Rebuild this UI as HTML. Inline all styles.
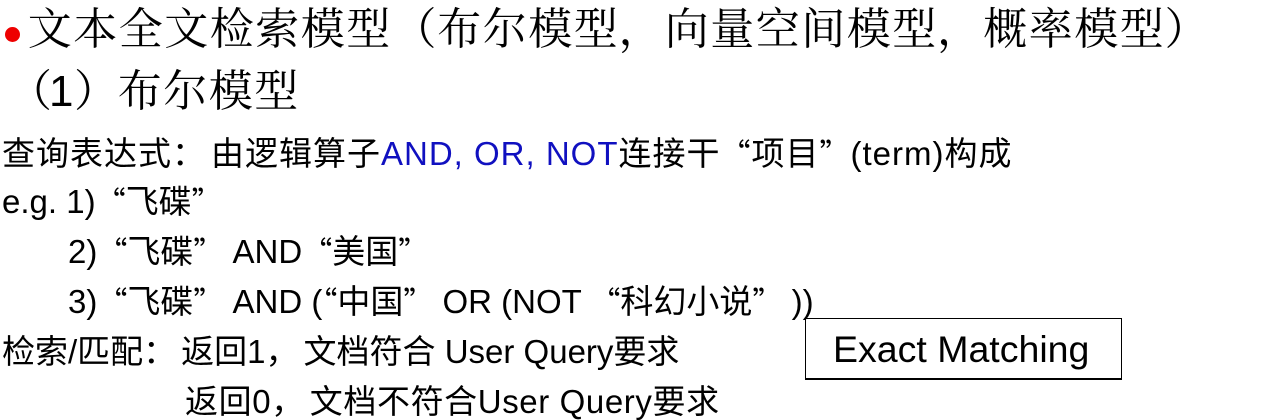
<!DOCTYPE html>
<html><head><meta charset="utf-8"><style>
body{margin:0;width:1268px;height:420px;background:#fff;position:relative;overflow:hidden;color:#000}
.l{position:absolute;white-space:nowrap;line-height:1}
.s{font-family:"Liberation Sans","Noto Sans CJK SC",sans-serif;font-size:33px}
.t{font-family:"Liberation Serif","Noto Serif CJK SC",serif;font-size:44px}
.b{color:#1010c0}
.q{font-family:"Noto Sans CJK SC",sans-serif;font-size:30px}
.c{margin-right:5px}
.g{display:grid;grid-auto-flow:column;grid-auto-columns:45.5px}
.g span{text-align:center}
</style></head><body>
<div style="position:absolute;left:5px;top:27px;width:15px;height:15px;border-radius:50%;background:#e00"></div>
<div class="l t g" style="left:27px;top:8px"><span>文</span><span>本</span><span>全</span><span>文</span><span>检</span><span>索</span><span>模</span><span>型</span><span style="text-align:right">（</span><span>布</span><span>尔</span><span>模</span><span>型</span><span style="text-align:left">，</span><span>向</span><span>量</span><span>空</span><span>间</span><span>模</span><span>型</span><span style="text-align:left">，</span><span>概</span><span>率</span><span>模</span><span>型</span><span style="text-align:left">）</span></div>
<div class="l t" style="left:8px;top:70px">（</div>
<div class="l t" style="left:49px;top:70px;font-family:'Liberation Sans',sans-serif;font-size:44px">1</div>
<div class="l t" style="left:74px;top:70px">）</div>
<div class="l t g" style="left:117px;top:70px"><span>布</span><span>尔</span><span>模</span><span>型</span></div>
<div class="l s" style="left:2px;top:137px;letter-spacing:1px">查询表达式<span class="c">：</span>由逻辑算子<span class="b">AND, OR, NOT</span>连接干<span class="q">“</span>项目<span class="q">”</span>(term)构成</div>
<div class="l s" style="left:2px;top:185px">e.g. 1)<span class="q">“</span>飞碟<span class="q">”</span></div>
<div class="l s" style="left:68px;top:235px">2)<span class="q">“</span>飞碟<span class="q">”</span> AND<span class="q">“</span>美国<span class="q">”</span></div>
<div class="l s" style="left:68px;top:285px">3)<span class="q">“</span>飞碟<span class="q">”</span> AND (<span class="q">“</span>中国<span class="q">”</span> OR (NOT <span class="q">“</span>科幻小说<span class="q">”</span> ))</div>
<div class="l s" style="left:2px;top:335px">检索/匹配<span class="c">：</span>返回1<span class="c">，</span>文档符合 User Query要求</div>
<div class="l s" style="left:185px;top:385px;letter-spacing:0.6px">返回0<span class="c">，</span>文档不符合User Query要求</div>
<div style="position:absolute;left:805px;top:318px;width:315px;height:59px;border:1px solid #000;border-bottom-width:2px"></div>
<div class="l s" style="left:833px;top:331px;font-size:37.5px">Exact Matching</div>
</body></html>
